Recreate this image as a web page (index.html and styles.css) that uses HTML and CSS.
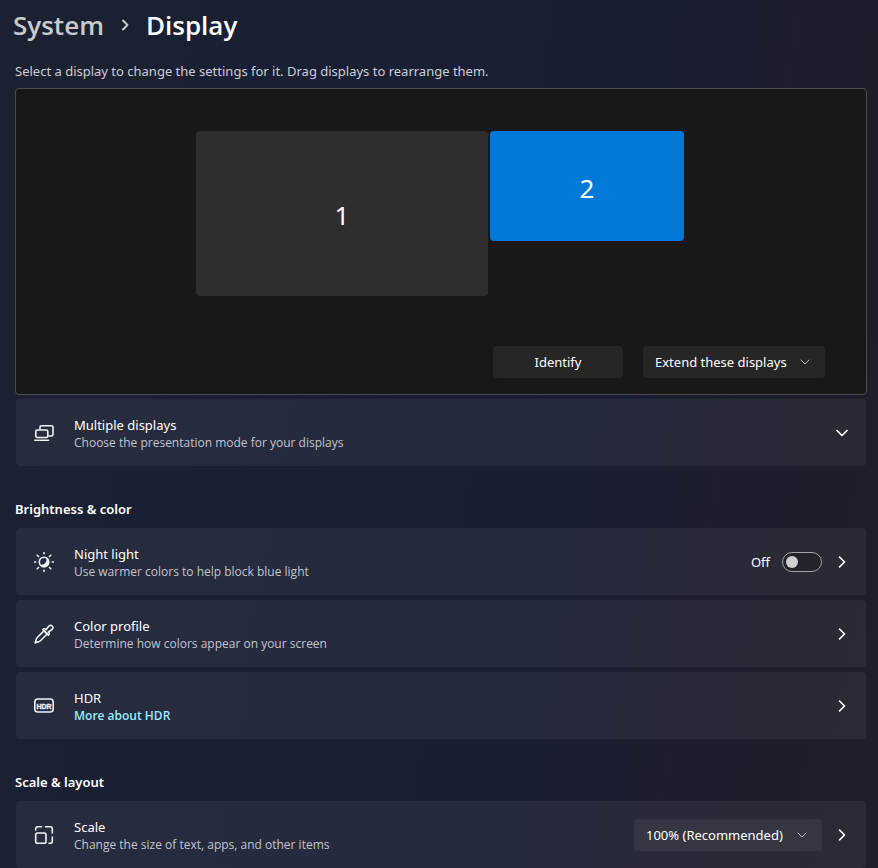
FILE: index.html
```html
<!DOCTYPE html>
<html lang="en">
<head>
<meta charset="utf-8">
<meta name="viewport" content="width=device-width, initial-scale=1">
<title>System - Display</title>
<link rel="stylesheet" href="styles.css">
</head>
<body>
<main class="page">
  <header>
    <nav class="breadcrumb" aria-label="Breadcrumb">
      <a class="crumb" href="#system">System</a>
      <svg class="crumb-arrow" viewBox="0 0 12 12" aria-hidden="true"><path d="M4 1.500 8.500 6 4 10.500"/></svg>
      <h1 class="title">Display</h1>
    </nav>
    <p class="intro">Select a display to change the settings for it. Drag displays to rearrange them.</p>
  </header>

  <section class="arrange" aria-label="Display arrangement">
    <div class="monitors">
      <button class="monitor primary" type="button">1</button>
      <button class="monitor secondary" type="button">2</button>
    </div>
    <div class="actions">
      <button class="button" type="button">Identify</button>
      <div class="picker">
        <select class="select extend" aria-label="Presentation mode"><option>Extend these displays</option></select>
        <svg class="picker-arrow" viewBox="0 0 12 12" aria-hidden="true"><path d="M2 4l4 4 4-4"/></svg>
      </div>
    </div>
  </section>

  <section class="group" aria-label="Multiple displays">
    <div class="card">
      <svg class="icon" viewBox="0 0 20 20" aria-hidden="true"><path d="M6 6V4.200Q6 2.800 7.400 2.800H17.600Q19 2.800 19 4.200V11.600Q19 13 17.600 13H14.500"/><rect x="1.800" y="7" width="12" height="7.500" rx="1.500"/><path d="M.8 17.200H14.500"/></svg>
      <div class="text"><h3 class="name">Multiple displays</h3><p class="note">Choose the presentation mode for your displays</p></div>
      <button class="go" type="button" aria-label="Expand multiple displays"><svg class="chevron" viewBox="0 0 12 12"><path d="M1 3.500l5 5 5-5"/></svg></button>
    </div>
  </section>

  <h2 class="heading">Brightness &amp; color</h2>
  <section class="group" aria-label="Brightness and color">
    <div class="card">
      <svg class="icon" viewBox="0 0 20 20" aria-hidden="true"><path d="M10 .7v1M10 18.300v1M.7 10h1M18.300 10h1M3.300 3.300l1.200 1.200M15.500 15.500l1.200 1.200M3.300 16.700l1.200-1.200M15.500 4.500l1.200-1.200"/><circle cx="10" cy="10" r="4.700"/><path class="solid" d="M12.500 5.800A5 5 0 1 1 5.800 12.500Q9.500 13.300 11.300 11Q13 8.800 12.500 5.800Z"/></svg>
      <div class="text"><h3 class="name">Night light</h3><p class="note">Use warmer colors to help block blue light</p></div>
      <label class="toggle"><span>Off</span><input class="switch" type="checkbox" role="switch" aria-label="Night light"></label>
      <button class="go" type="button" aria-label="Open night light"><svg class="chevron" viewBox="0 0 12 12"><path d="M3.500 1l5 5-5 5"/></svg></button>
    </div>
    <div class="card">
      <svg class="icon" viewBox="0 0 20 20" aria-hidden="true"><path d="M10.200 6.600L3.500 13.300Q2.200 14.600 1.900 16.600L1.100 18.900L3.400 18.100Q5.400 17.800 6.700 16.500L13.400 9.800Z"/><path d="M8.800 5.600Q9.800 4.200 11.200 5L12.100 5.700L14.500 2.600Q16.100.7 18.100 1.900Q20 3.900 18 5.500L14.500 8L15.100 9Q15.700 10.300 14.400 11.200Z"/></svg>
      <div class="text"><h3 class="name">Color profile</h3><p class="note">Determine how colors appear on your screen</p></div>
      <button class="go" type="button" aria-label="Open color profile"><svg class="chevron" viewBox="0 0 12 12"><path d="M3.500 1l5 5-5 5"/></svg></button>
    </div>
    <div class="card">
      <svg class="icon" viewBox="0 0 20 20" aria-hidden="true"><rect x=".8" y="3" width="18.400" height="13" rx="3"/><text class="icon-text" x="10" y="12.500" text-anchor="middle">HDR</text></svg>
      <div class="text"><h3 class="name">HDR</h3><p class="note"><a class="link" href="#hdr">More about HDR</a></p></div>
      <button class="go" type="button" aria-label="Open HDR"><svg class="chevron" viewBox="0 0 12 12"><path d="M3.500 1l5 5-5 5"/></svg></button>
    </div>
  </section>

  <h2 class="heading">Scale &amp; layout</h2>
  <section class="group" aria-label="Scale and layout">
    <div class="card">
      <svg class="icon" viewBox="0 0 20 20" aria-hidden="true"><rect x="1.700" y="8" width="10.300" height="10.300" rx="1.800"/><path d="M1.700 5V3.700Q1.700 1.700 3.700 1.700H7.500M11.500 1.700H16.300Q18.300 1.700 18.300 3.700V8M18.300 12V16.300Q18.300 18.300 16.300 18.300H15"/></svg>
      <div class="text"><h3 class="name">Scale</h3><p class="note">Change the size of text, apps, and other items</p></div>
      <div class="picker">
        <select class="select scale" aria-label="Scale"><option>100% (Recommended)</option></select>
        <svg class="picker-arrow" viewBox="0 0 12 12" aria-hidden="true"><path d="M2 4l4 4 4-4"/></svg>
      </div>
      <button class="go" type="button" aria-label="Open scale"><svg class="chevron" viewBox="0 0 12 12"><path d="M3.500 1l5 5-5 5"/></svg></button>
    </div>
  </section>
</main>
</body>
</html>
```

FILE: styles.css
```css
* { box-sizing: border-box; }
body {
  margin: 0;
  min-height: 100vh;
  background: linear-gradient(100deg, #1c2231 0%, #1a1f33 25%, #1a1e33 62%, #1e1e29 90%, #1d202b 100%);
  color: #fff;
  font: 13px/18px "Noto Sans", "Open Sans", sans-serif;
}
h1, h2, h3, p { margin: 0; font-weight: 400; }
button, select, input { font: inherit; color: inherit; margin: 0; }
svg { fill: none; stroke: currentColor; stroke-linecap: round; stroke-linejoin: round; flex: none; }

.page { padding: 7px 12px 0 15px; }
.breadcrumb {
  display: flex;
  align-items: center;
  gap: 15px;
  height: 36px;
  margin-left: -2px;
  font: 26px/36px "Open Sans", "Noto Sans", sans-serif;
}
.crumb { color: #c9cbd0; font-weight: 600; text-decoration: none; }
.title { font-size: 26px; font-weight: 600; }
.crumb-arrow { width: 12px; height: 12px; color: #c9cbd0; stroke-width: 2; }
.intro { margin-top: 19px; color: #cdced4; }

.arrange {
  margin: 8px -1px 4px 0;
  padding: 42px 41px 16px;
  border: 1px solid #4b4c50;
  border-radius: 4px;
  background: #181818;
}
.monitors { display: flex; justify-content: center; align-items: flex-start; gap: 2px; margin-right: 2px; }
.monitor { padding: 3px 0 0; border: 0; border-radius: 4px; font-size: 26px; }
.primary { width: 292px; height: 165px; background: #2e2e2e; }
.secondary { width: 194px; height: 110px; background: #0078d7; }
.actions { display: flex; justify-content: flex-end; gap: 20px; margin-top: 50px; }
.button { width: 130px; height: 32px; padding: 0; border: 0; border-radius: 4px; background: #262626; }

.picker { position: relative; }
.select {
  display: block;
  height: 32px;
  padding: 0 30px 0 12px;
  border: 0;
  border-radius: 4px;
  appearance: none;
}
.extend { width: 182px; background: #262626; }
.scale { width: 188px; background: #353642; }
.picker-arrow { position: absolute; right: 14px; top: 10px; width: 12px; height: 12px; color: #b9bac0; pointer-events: none; }

.group { display: grid; gap: 5px; padding-left: 1px; }
.card {
  display: flex;
  align-items: center;
  min-height: 67px;
  padding: 0 16px 0 18px;
  border-radius: 4px;
  background: rgba(255, 255, 255, .055);
}
.icon { width: 20px; height: 20px; margin-right: 20px; color: #f1f2f7; stroke-width: 1.6; }
.solid { fill: currentColor; stroke: none; }
.icon-text { fill: currentColor; stroke: currentColor; stroke-width: .3; font: bold 7px "Liberation Sans", sans-serif; }
.text { flex: 1; min-width: 0; padding-top: 2px; }
.name { font-size: 13px; line-height: 18px; }
.note { font: 12px/18px "Open Sans", "Noto Sans", sans-serif; color: #c3c5ce; }
.link { color: #99ebff; font-weight: 600; text-decoration: none; }
.heading { margin: 34px 0 9px; font-size: 13px; line-height: 19px; font-weight: 600; }

.toggle { display: flex; align-items: center; gap: 12px; }
.switch {
  width: 40px;
  height: 20px;
  padding: 3px;
  border: 1px solid #a3a3a8;
  border-radius: 10px;
  background: #23232c;
  appearance: none;
}
.switch::before { content: ""; display: block; width: 12px; height: 12px; border-radius: 50%; background: #d0d0d2; }
.switch:checked::before { margin-left: auto; }
.go { display: flex; margin-left: 12px; padding: 2px; border: 0; background: none; }
.chevron { width: 12px; height: 12px; stroke-width: 1.6; }
```
